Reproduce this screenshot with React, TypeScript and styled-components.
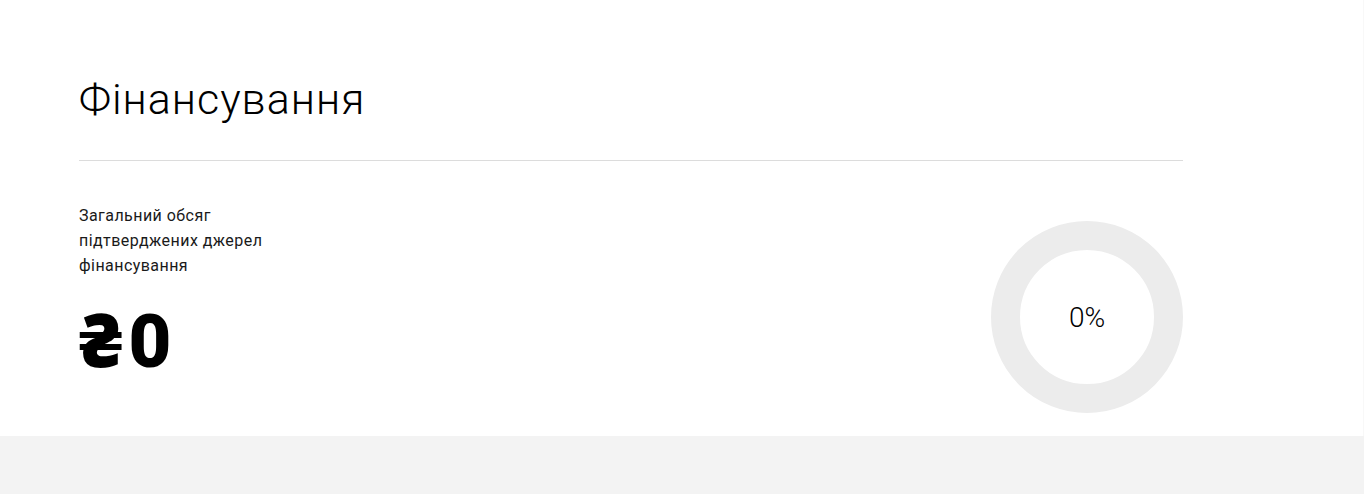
import React from "react";
import styled, { createGlobalStyle } from "styled-components";

const Global = createGlobalStyle`
  html, body { margin: 0; padding: 0; background: #f3f3f3; }
  body { font-family: Roboto, "Noto Sans", sans-serif; color: #000; }
`;

const Section = styled.section`
  background: #fff;
  height: 436px;
  box-sizing: border-box;
  padding: 0 0 0 79px;
  border-right: 1px solid #f8f8f8;
`;

const Container = styled.div`
  width: 1104px;
`;

const Title = styled.h1`
  margin: 0;
  padding: 72px 0 34px;
  font-size: 43px;
  font-weight: 300;
  line-height: 54px;
  letter-spacing: 1px;
  border-bottom: 1px solid #dcdcdc;
`;

const Body = styled.div`
  display: flex;
  justify-content: space-between;
  align-items: flex-start;
`;

const Info = styled.div`
  padding-top: 42px;
  display: flex;
  flex-direction: column;
`;

const Label = styled.p`
  margin: 0;
  width: 210px;
  font-size: 16px;
  line-height: 25px;
  font-weight: 400;
  letter-spacing: 0.45px;
  color: #1a1a1a;
`;

const Amount = styled.div`
  margin-top: 22px;
  font-size: 74px;
  font-weight: 900;
  line-height: 84px;
  letter-spacing: 6px;
`;

const Donut = styled.div`
  margin-top: 60px;
  width: 192px;
  height: 192px;
  box-sizing: border-box;
  border-radius: 50%;
  border: 29px solid #ececec;
  display: flex;
  align-items: center;
  justify-content: center;
  font-size: 28px;
  font-weight: 300;
`;

export default function App() {
  return (
    <>
      <Global />
      <Section>
        <Container>
          <Title>Фінансування</Title>
          <Body>
            <Info>
              <Label>Загальний обсяг підтверджених джерел фінансування</Label>
              <Amount>₴0</Amount>
            </Info>
            <Donut>0%</Donut>
          </Body>
        </Container>
      </Section>
    </>
  );
}
